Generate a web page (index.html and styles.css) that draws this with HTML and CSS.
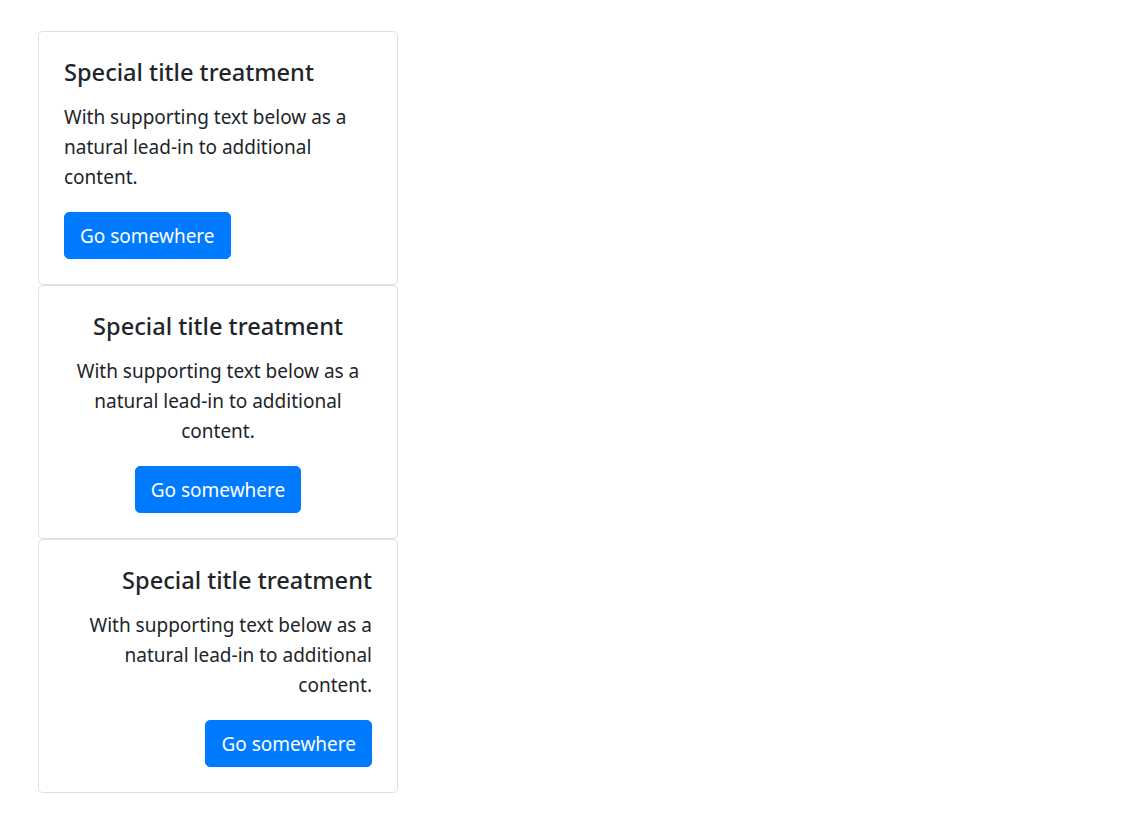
FILE: index.html
```html
<!DOCTYPE html>
<html lang="en">

<head>
    <meta charset="UTF-8">
    <meta name="viewport" content="width=device-width, initial-scale=1.0">
    <title>Cards</title>
    <link rel="stylesheet" href="styles.css">
</head>

<body>
    <div class="lista-cards">
        <div class="card">
            <div class="card-body">
                <h5 class="card-title">Special title treatment</h5>
                <p class="card-text">With supporting text below as a natural lead-in to additional content.</p>
                <a href="#" class="botao">Go somewhere</a>
            </div>
        </div>

        <div class="card texto-centro">
            <div class="card-body">
                <h5 class="card-title">Special title treatment</h5>
                <p class="card-text">With supporting text below as a natural lead-in to additional content.</p>
                <a href="#" class="botao">Go somewhere</a>
            </div>
        </div>

        <div class="card texto-direita">
            <div class="card-body">
                <h5 class="card-title">Special title treatment</h5>
                <p class="card-text">With supporting text below as a natural lead-in to additional content.</p>
                <a href="#" class="botao">Go somewhere</a>
            </div>
        </div>
    </div>
</body>

</html>
```
FILE: styles.css
```css
html {
    font-size: 20px;
}

body {
    margin: 0;
    padding: 31px 38px;
    font-family: "Noto Sans", "Open Sans", sans-serif;
    font-size: 19px;
    line-height: 30px;
    color: #212529;
    background-color: #fff;
}

.lista-cards {
    width: 360px;
}

.card {
    border: 1px solid rgba(0, 0, 0, 0.125);
    border-radius: .25rem;
    background-color: #fff;
}

.card-body {
    padding: 1.25rem;
}

.card-title {
    margin: 0 0 .75rem 0;
    font-size: 23.6px;
    font-weight: 500;
    line-height: 30px;
}

.card-text {
    margin: 0 0 1rem 0;
}

.botao {
    display: inline-block;
    padding: 7.5px 15px;
    border: 1px solid #007bff;
    border-radius: .25rem;
    background-color: #007bff;
    color: #fff;
    text-decoration: none;
    line-height: 30px;
}

.texto-centro {
    text-align: center;
}

.texto-direita {
    text-align: right;
}
```
